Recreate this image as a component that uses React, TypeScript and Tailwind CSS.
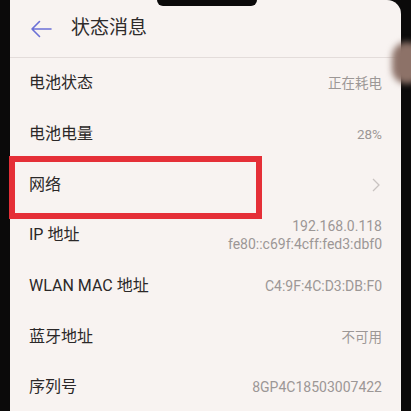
import React from "react";

const rows: { label: string; value: React.ReactNode; chevron?: boolean; latin?: boolean }[] = [
  { label: "电池状态", value: "正在耗电" },
  { label: "电池电量", value: "28%" },
  { label: "网络", value: null, chevron: true },
  {
    label: "IP 地址",
    latin: true,
    value: (
      <div className="flex flex-col items-end leading-[18px]">
        <span>192.168.0.118</span>
        <span>fe80::c69f:4cff:fed3:dbf0</span>
      </div>
    ),
  },
  { label: "WLAN MAC 地址", value: "C4:9F:4C:D3:DB:F0", latin: true },
  { label: "蓝牙地址", value: "不可用" },
  { label: "序列号", value: "8GP4C18503007422", latin: true },
];

export default function App() {
  return (
    <div
      className="w-[411px] h-[411px] bg-[#0b0a0a] overflow-hidden relative flex"
      style={{ fontFamily: 'Roboto, "Noto Sans CJK SC", sans-serif' }}
    >
      <div className="ml-[10px] w-[391px] h-full bg-[#f8f3f1] relative rounded-tr-[14px] flex flex-col">
        {/* notch */}
        <div className="absolute left-[147px] top-0 w-[100px] h-[6px] bg-[#0b0a0a] rounded-b-[12px]" />
        {/* header */}
        <div className="h-[58px] flex items-center border-b border-[#e3dcda] shrink-0">
          <svg width="22" height="18" viewBox="0 0 22 18" className="ml-[20px]">
            <path d="M21 9H2M9.5 1.5L2 9l7.5 7.5" fill="none" stroke="#6b70d6" strokeWidth="1.6" strokeLinecap="round" strokeLinejoin="round" />
          </svg>
          <span className="ml-[19px] text-[19px] text-[#2e2b2b]">状态消息</span>
        </div>
        {rows.map((r) => (
          <div key={r.label} className="h-[50.7px] shrink-0 flex items-center justify-between pl-[19px] pr-[19px]">
            <span className="text-[16px] text-[#2b2828]">{r.label}</span>
            {r.chevron ? (
              <svg width="8" height="14" viewBox="0 0 8 14" className="mr-[2px]">
                <path d="M1 1l6 6-6 6" fill="none" stroke="#c9c3c1" strokeWidth="1.3" />
              </svg>
            ) : (
              <div className={r.latin ? "text-[14px] text-[#9c9796]" : "text-[13.5px] text-[#9c9796]"}>{r.value}</div>
            )}
          </div>
        ))}
        {/* red annotation box */}
        <div className="absolute left-[-1px] top-[156px] w-[253px] h-[63px] border-[6px] border-[#e52f37]" />
      </div>
      {/* finger blob */}
      <div className="absolute left-[392px] top-[42px] w-[30px] h-[42px] rounded-full bg-[#8d7268] blur-[3px]" />
    </div>
  );
}
